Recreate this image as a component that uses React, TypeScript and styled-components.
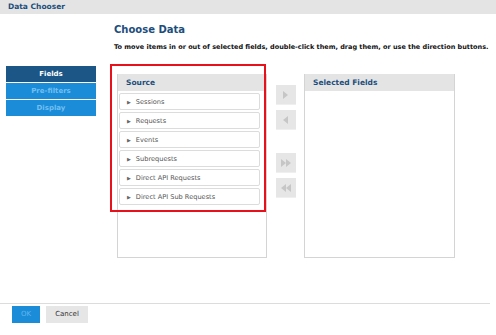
import styled, { createGlobalStyle } from "styled-components";

const GlobalStyle = createGlobalStyle`
  html, body {
    margin: 0;
    padding: 0;
    background: #fff;
  }
  body {
    font-family: "DejaVu Sans", Verdana, sans-serif;
  }
`;

const Page = styled.div`
  position: relative;
  width: 496px;
  height: 335px;
  display: flex;
  flex-direction: column;
  overflow: hidden;
`;

const TitleBar = styled.div`
  height: 14px;
  line-height: 14px;
  background: #e4e4e4;
  padding-left: 8px;
  font-size: 7.5px;
  font-weight: bold;
  color: #1c4e7c;
`;

const Body = styled.div`
  flex: 1;
  display: flex;
`;

const Nav = styled.div`
  margin: 52px 0 0 6px;
  width: 90px;
  display: flex;
  flex-direction: column;
  gap: 1px;
`;

const NavItem = styled.div<{ active?: boolean }>`
  height: 16px;
  line-height: 16px;
  text-align: center;
  font-size: 7px;
  font-weight: bold;
  background: ${p => (p.active ? "#1c5686" : "#1a8cd8")};
  color: ${p => (p.active ? "#fff" : "#72bff0")};
`;

const Content = styled.div`
  margin-left: 18px;
  display: flex;
  flex-direction: column;
`;

const Heading = styled.div`
  margin-top: 9px;
  font-size: 10px;
  font-weight: bold;
  color: #1c4e7c;
  line-height: 13px;
`;

const Hint = styled.div`
  margin-top: 7px;
  font-size: 6.5px;
  font-weight: bold;
  color: #111;
  line-height: 9px;
  white-space: nowrap;
`;

const Panels = styled.div`
  margin-top: 22px;
  margin-left: 3px;
  display: flex;
  align-items: flex-start;
`;

const Panel = styled.div<{ w: number }>`
  width: ${p => p.w}px;
  height: 184px;
  box-sizing: border-box;
  border: 1px solid #d4d4d4;
  border-top: none;
  display: flex;
  flex-direction: column;
`;

const PanelHeader = styled.div`
  height: 17px;
  line-height: 17px;
  background: #e4e4e4;
  padding-left: 8px;
  font-size: 7.5px;
  font-weight: bold;
  color: #1c4e7c;
`;

const ItemList = styled.div`
  padding: 2px 0 0 1px;
  display: flex;
  flex-direction: column;
  gap: 2px;
`;

const Item = styled.div`
  width: 141px;
  height: 17px;
  box-sizing: border-box;
  border: 1px solid #dcdcdc;
  border-radius: 2px;
  display: flex;
  align-items: center;
  padding-left: 7px;
  gap: 5px;
  font-size: 6.6px;
  color: #555;
`;

const Caret = styled.span`
  font-size: 5px;
  color: #666;
`;

const Arrows = styled.div`
  margin: 11px 8px 0 9px;
  display: flex;
  flex-direction: column;
`;

const ArrowButton = styled.div<{ gapTop: number }>`
  margin-top: ${p => p.gapTop}px;
  width: 20px;
  height: 19px;
  background: #e6e6e6;
  border-bottom: 1px solid #efefef;
  display: flex;
  align-items: center;
  justify-content: center;
`;

const Footer = styled.div`
  margin-right: 6px;
  height: 29px;
  border-top: 1px solid #dcdcdc;
  display: flex;
  align-items: flex-start;
  padding: 2px 0 0 12px;
  gap: 6px;
`;

const Button = styled.div<{ primary?: boolean }>`
  height: 17px;
  line-height: 17px;
  padding: 0 ${p => (p.primary ? 8 : 7)}px;
  min-width: ${p => (p.primary ? 28 : 42)}px;
  box-sizing: border-box;
  text-align: center;
  font-size: 7px;
  background: ${p => (p.primary ? "#1a8cd8" : "#e6e6e6")};
  color: ${p => (p.primary ? "#62b6ee" : "#333")};
`;

const Highlight = styled.div`
  position: absolute;
  left: 110px;
  top: 64px;
  width: 156px;
  height: 148px;
  box-sizing: border-box;
  border: 2px solid #e8101a;
  pointer-events: none;
`;

const sources = [
  "Sessions",
  "Requests",
  "Events",
  "Subrequests",
  "Direct API Requests",
  "Direct API Sub Requests",
];

const Tri = ({ dir, double }: { dir: "r" | "l"; double?: boolean }) => {
  const one = (x: number) =>
    dir === "r" ? `M${x} 1 L${x + 5} 5 L${x} 9 Z` : `M${x + 5} 1 L${x} 5 L${x + 5} 9 Z`;
  return (
    <svg width={double ? 11 : 6} height="10" viewBox={`0 0 ${double ? 11 : 6} 10`}>
      <path d={one(0)} fill="#c6c6c6" />
      {double && <path d={one(5)} fill="#c6c6c6" />}
    </svg>
  );
};

export default function App() {
  return (
    <Page>
      <GlobalStyle />
      <TitleBar>Data Chooser</TitleBar>
      <Body>
        <Nav>
          <NavItem active>Fields</NavItem>
          <NavItem>Pre-filters</NavItem>
          <NavItem>Display</NavItem>
        </Nav>
        <Content>
          <Heading>Choose Data</Heading>
          <Hint>
            To move items in or out of selected fields, double-click them, drag them, or use the direction buttons.
          </Hint>
          <Panels>
            <Panel w={150}>
              <PanelHeader>Source</PanelHeader>
              <ItemList>
                {sources.map(s => (
                  <Item key={s}>
                    <Caret>▶</Caret>
                    {s}
                  </Item>
                ))}
              </ItemList>
            </Panel>
            <Arrows>
              <ArrowButton gapTop={0}>
                <Tri dir="r" />
              </ArrowButton>
              <ArrowButton gapTop={5}>
                <Tri dir="l" />
              </ArrowButton>
              <ArrowButton gapTop={23}>
                <Tri dir="r" double />
              </ArrowButton>
              <ArrowButton gapTop={5}>
                <Tri dir="l" double />
              </ArrowButton>
            </Arrows>
            <Panel w={151}>
              <PanelHeader>Selected Fields</PanelHeader>
            </Panel>
          </Panels>
        </Content>
      </Body>
      <Footer>
        <Button primary>OK</Button>
        <Button>Cancel</Button>
      </Footer>
      <Highlight />
    </Page>
  );
}
